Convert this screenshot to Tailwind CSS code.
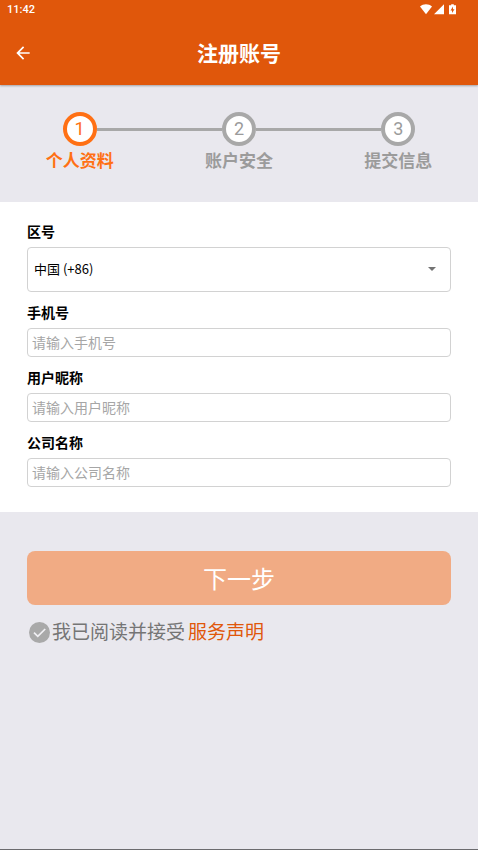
<!DOCTYPE html>
<html lang="zh-CN">
<head>
<meta charset="utf-8">
<meta name="viewport" content="width=device-width, initial-scale=1">
<title>注册账号</title>
<script src="https://cdn.jsdelivr.net/npm/@tailwindcss/browser@4"></script>
</head>
<body class="flex min-h-screen flex-col border-b border-[#6b6b6e] bg-[#e9e8ee] font-['Roboto','Noto_Sans_CJK_SC',sans-serif] text-black">
  <header class="bg-[#e0570b] text-white shadow-[0_1px_2px_rgba(0,0,0,0.3)]">
    <div class="flex h-5 items-center justify-between pr-[22px] pl-[7px]">
      <time class="text-[11px] leading-5 font-medium">11:42</time>
      <div class="flex items-center">
        <svg class="h-3 w-3" viewBox="0 0 12 12" fill="currentColor" aria-hidden="true"><path d="M0 2.4C3.4-.6 8.6-.6 12 2.4L6 10.2z"/></svg>
        <svg class="ml-0.5 h-3 w-[10px]" viewBox="0 0 10 12" fill="currentColor" aria-hidden="true"><path d="M10 .2v10H0z"/></svg>
        <svg class="ml-[5px] h-3 w-[7px]" viewBox="0 0 7 12" fill="currentColor" fill-rule="evenodd" aria-hidden="true"><path d="M2.2.2h2.6v1H7v9H0v-9h2.2zM4 2.6L1.5 6.4H3V9l2.5-3.8H4z"/></svg>
      </div>
    </div>
    <div class="grid h-[65px] grid-cols-[1fr_auto_1fr] items-center px-[13px]">
      <button type="button" aria-label="返回" class="w-5">
        <svg class="h-5 w-5" viewBox="0 0 24 24" fill="currentColor" aria-hidden="true"><path d="M20 11H7.83l5.59-5.59L12 4l-8 8 8 8 1.41-1.41L7.83 13H20z"/></svg>
      </button>
      <h1 class="pt-0.5 text-[21px] leading-8 font-bold">注册账号</h1>
    </div>
  </header>

  <ol class="grid h-[117px] grid-cols-3 pt-[27px] text-center text-[#9b9b9b]">
    <li class="flex flex-col items-center text-[#ff7014]">
      <div class="grid w-full grid-cols-[1fr_auto_1fr] items-center">
        <span></span>
        <span class="flex h-[34px] w-[34px] items-center justify-center rounded-full border-4 border-[#ff7014] bg-white text-[18px] leading-6">1</span>
        <span class="h-[3px] bg-[#a8a8a8]"></span>
      </div>
      <span class="mt-[3px] text-[17px] leading-6 font-bold">个人资料</span>
    </li>
    <li class="flex flex-col items-center">
      <div class="grid w-full grid-cols-[1fr_auto_1fr] items-center">
        <span class="h-[3px] bg-[#a8a8a8]"></span>
        <span class="flex h-[34px] w-[34px] items-center justify-center rounded-full border-4 border-[#a8a8a8] bg-white text-[18px] leading-6">2</span>
        <span class="h-[3px] bg-[#a8a8a8]"></span>
      </div>
      <span class="mt-[3px] text-[17px] leading-6 font-bold">账户安全</span>
    </li>
    <li class="flex flex-col items-center">
      <div class="grid w-full grid-cols-[1fr_auto_1fr] items-center">
        <span class="h-[3px] bg-[#a8a8a8]"></span>
        <span class="flex h-[34px] w-[34px] items-center justify-center rounded-full border-4 border-[#a8a8a8] bg-white text-[18px] leading-6">3</span>
        <span></span>
      </div>
      <span class="mt-[3px] text-[17px] leading-6 font-bold">提交信息</span>
    </li>
  </ol>

  <form>
    <div class="flex flex-col gap-[11px] bg-white px-[27px] pt-5 pb-[25px]">
      <div class="flex flex-col gap-[5px]">
        <label for="area" class="text-[14px] leading-5 font-bold">区号</label>
        <div class="grid items-center">
          <select id="area" class="col-start-1 row-start-1 h-[45px] w-full appearance-none rounded border border-[#d2d2d2] bg-white px-1.5 pb-0.5 font-['Noto_Sans_CJK_SC',sans-serif] text-[13px]">
            <option>中国 (+86)</option>
          </select>
          <svg class="pointer-events-none col-start-1 row-start-1 mr-[15px] mb-0.5 h-1 w-2 justify-self-end" viewBox="0 0 8 4" fill="#737373" aria-hidden="true"><path d="M0 0h8L4 4z"/></svg>
        </div>
      </div>
      <div class="flex flex-col gap-[5px]">
        <label for="phone" class="text-[14px] leading-5 font-bold">手机号</label>
        <input id="phone" type="tel" placeholder="请输入手机号" class="h-[29px] w-full rounded border border-[#d2d2d2] px-1 text-[14px] placeholder:text-[#a6a6a6]">
      </div>
      <div class="flex flex-col gap-[5px]">
        <label for="nick" class="text-[14px] leading-5 font-bold">用户昵称</label>
        <input id="nick" type="text" placeholder="请输入用户昵称" class="h-[29px] w-full rounded border border-[#d2d2d2] px-1 text-[14px] placeholder:text-[#a6a6a6]">
      </div>
      <div class="flex flex-col gap-[5px]">
        <label for="company" class="text-[14px] leading-5 font-bold">公司名称</label>
        <input id="company" type="text" placeholder="请输入公司名称" class="h-[29px] w-full rounded border border-[#d2d2d2] px-1 text-[14px] placeholder:text-[#a6a6a6]">
      </div>
    </div>

    <div class="px-[27px] pt-[39px]">
      <button type="submit" disabled class="h-[54px] w-full rounded-lg bg-[#f1ab84] pt-1 text-[24px] text-white">下一步</button>
      <div class="mt-[11px] flex items-center pl-0.5 text-[19px] leading-[30px] text-[#757575]">
        <span class="grid h-[21px] w-[21px] place-items-center">
          <input id="agree" type="checkbox" class="col-start-1 row-start-1 h-[21px] w-[21px] appearance-none rounded-full bg-[#a9a9a9] checked:bg-[#e0570b]">
          <svg class="pointer-events-none col-start-1 row-start-1 h-[21px] w-[21px]" viewBox="0 0 21 21" fill="none" stroke="#f1f0f4" stroke-width="1.7" aria-hidden="true"><path d="M5 10.6l3.8 3.8 7.4-7.4"/></svg>
        </span>
        <label for="agree" class="ml-0.5 pt-0.5">我已阅读并接受</label>
        <a href="#" class="ml-[3px] pt-0.5 text-[#e0570b]">服务声明</a>
      </div>
    </div>
  </form>
</body>
</html>
